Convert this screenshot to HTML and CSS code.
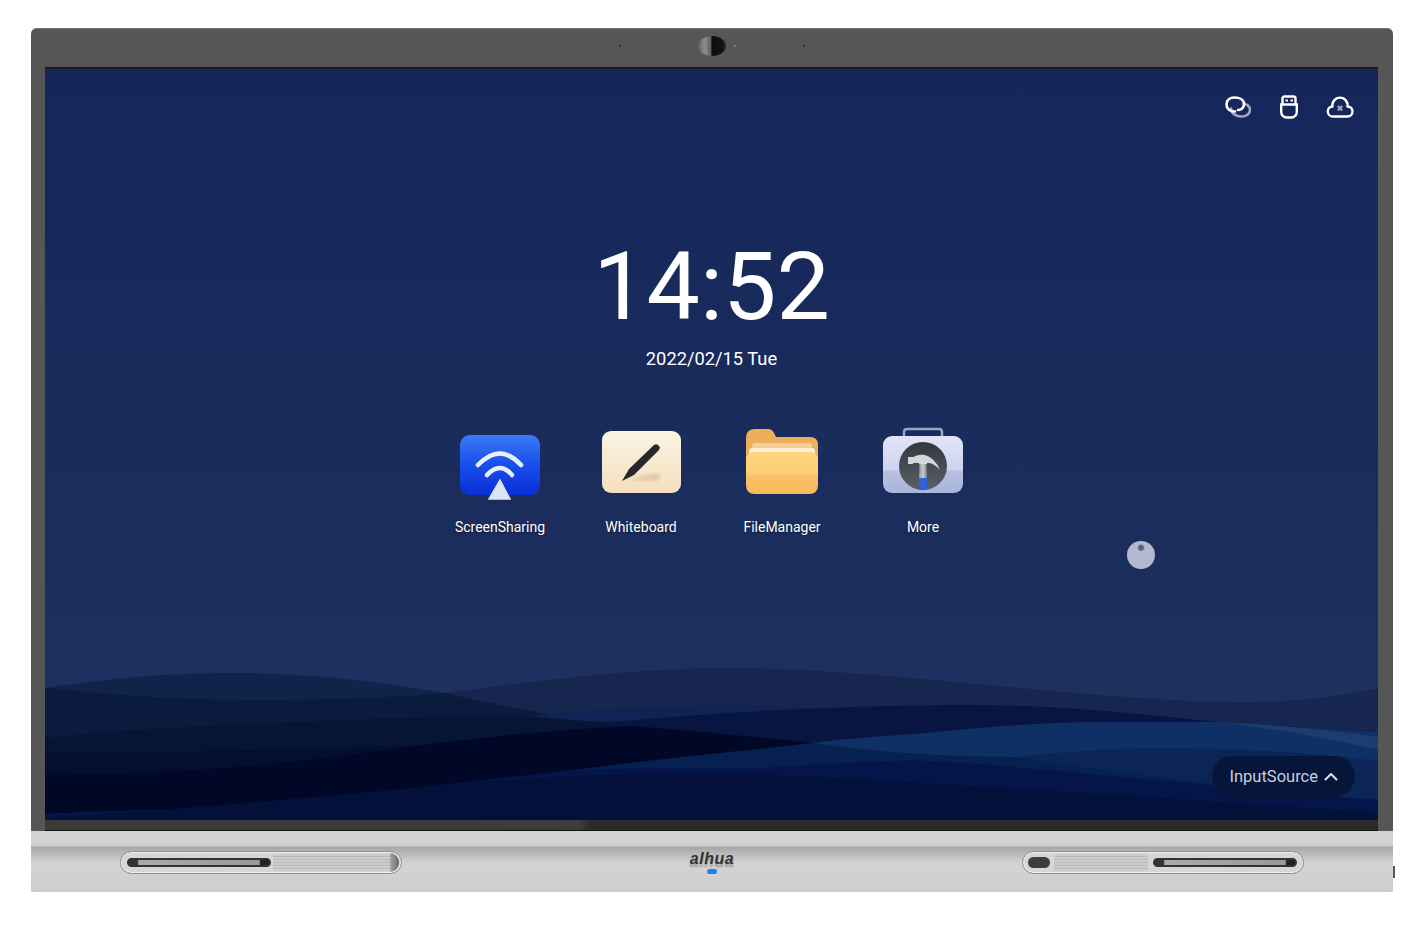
FILE: index.html
```html
<!doctype html>
<html>
<head>
 <title>Interactive Display</title>
 <meta name=viewport content="width=device-width, initial-scale=1">
 <link rel="stylesheet" href="styles.css">
</head>
<body>
<div class=device>
 <div class=bezel>
  <div class=mics-left><span class=mic></span></div>
  <span class=cam></span>
  <div class=mics-right><span class="mic mic-near"></span><span class=mic></span></div>
 </div>
 <div class=panel>
  <div class=screen>
   <svg class=waves viewBox="45 640 1333 180" preserveAspectRatio="none">
    <path fill="#17264f" d="M445 693C540 680 640 668 730 668C880 668 1100 702 1240 702C1300 702 1345 696 1378 688V820H445Z"/>
    <path fill="#10244b" d="M45 688C110 678 170 673 231 673C310 673 380 682 445 693L700 760L45 760Z"/>
    <path fill="#0a1b3e" d="M45 688C120 696 190 700 253 700C320 700 390 698 445 693C500 706 560 716 620 726L620 790H45Z"/>
    <path fill="#0f2452" d="M530 716C600 708 680 706 760 705L1000 720L700 745L600 725Z"/>
    <path fill="#061536" d="M45 738C120 730 190 726 253 724C340 720 420 717 490 716C530 716 570 720 625 724L660 780H45Z"/>
    <path fill="#071540" d="M610 722C720 712 850 705 970 705C1060 705 1140 714 1218 722L1378 732V800H700Z"/>
    <path fill="#040f30" d="M45 752C120 751 190 752 253 750L420 745L500 790H45Z"/>
    <path fill="#010726" d="M45 775C150 775 260 768 387 750C470 738 550 730 633 726C680 730 750 736 812 743C780 747 755 749 730 752C670 758 620 764 566 771C500 778 440 785 387 791C340 797 300 802 253 806L45 814Z"/>
    <path fill="#0e3064" d="M812 743C850 738 885 736 925 733C985 727 1045 722 1105 722H1218L1378 732V780H880Z"/>
    <path fill="#1c3d6e" d="M1218 722C1280 725 1330 730 1378 737V750C1345 742 1300 732 1218 722Z"/>
    <path fill="#0b2656" d="M1015 757C1060 752 1105 749 1150 748C1230 748 1310 752 1378 761V800H1000Z"/>
    <path fill="#06204f" d="M566 771C620 764 670 758 730 752C760 749 790 746 812 743C860 750 920 756 1015 757C1100 770 1250 790 1378 800V820H566Z"/>
    <path fill="#04154a" d="M45 814L253 806C300 802 340 797 387 791L566 771C640 766 700 770 760 768C820 765 890 758 948 762C1040 768 1250 790 1378 800V820H45Z"/>
    <path fill="#02103a" d="M45 818C200 808 340 795 476 782C560 776 640 773 700 773C800 774 1000 788 1150 797C1230 803 1310 808 1378 813V820H45Z"/>
   </svg>
   <div class=status>
    <svg class=ico-link viewBox="0 0 26 22" fill=none stroke-linecap=round stroke-width=2.600>
     <path stroke="#a2a9bf" d="M20 8C23 9 25 11 25 14C25 18 21 20.500 16.500 20.500C10.500 20.500 6.500 17.500 6 12.500"/>
     <path stroke="#fff" d="M10 15.500C5 15.500 1.500 13 1.500 8.500C1.500 4 5 1.500 9.500 1.500C15 1.500 19 4 19 8C19 12 16 14 13 14"/>
    </svg>
    <svg class=ico-usb viewBox="1 0 18 24" fill=none stroke="#fff" stroke-width=2.400>
     <path d="M3.500 9V3.500Q3.500 1.500 5.500 1.500H14.500Q16.500 1.500 16.500 3.500V9"/>
     <path d="M2.200 9.500H17.800V17A5.500 5.500 0 0 1 12.300 22.500H7.700A5.500 5.500 0 0 1 2.200 17Z"/>
     <path stroke-width=2 d="M6.500 5.500H9M11.500 5.500H14"/>
    </svg>
    <svg class=ico-cloud viewBox="0 0 28 22" fill=none stroke="#fff" stroke-width=2.400 stroke-linejoin=round>
     <path d="M7 20.500H21.500A5 5 0 0 0 21.500 10.500A7.600 7.600 0 1 0 6.500 10.500A5 5 0 0 0 7 20.500Z"/>
     <path stroke="#a2a9bf" stroke-width=2 d="M11.800 10L16.200 14.500M16.200 10L11.800 14.500"/>
    </svg>
   </div>
   <div class=clock>14:52</div>
   <div class=date>2022/02/15 Tue</div>
   <div class=apps>
    <div class=app>
     <svg viewBox="0 0 100 76">
      <defs><linearGradient id=gs x1=0 y1=0 x2=0 y2=1><stop offset=0 stop-color="#3d7bf7"/><stop offset=.45 stop-color="#1a52ec"/><stop offset=1 stop-color="#0a2fd6"/></linearGradient></defs>
      <rect x=10 y=9 width=80 height=60 rx=10 fill="url(#gs)"/>
      <g fill=none stroke="#e9eefc" stroke-width=4.500 stroke-linecap=round>
       <path d="M28 39Q50 16 71 39"/>
       <path d="M37 49Q50 35 62 49"/>
      </g>
      <path d="M50 54L60 73H39Z" fill="#dde2f6" stroke="#dde2f6" stroke-width=1.500 stroke-linejoin=round/>
     </svg>
     <span>ScreenSharing</span>
    </div>
    <div class=app>
     <svg viewBox="0 0 100 76">
      <defs>
       <linearGradient id=gw x1=0 y1=0 x2=0 y2=1><stop offset=0 stop-color="#fbf3e3"/><stop offset=1 stop-color="#f5dfbd"/></linearGradient>
       <filter id=bl><feGaussianBlur stdDeviation=2 /></filter>
      </defs>
      <rect x=11 y=5 width=79 height=62 rx=9 fill="url(#gw)"/>
      <path d="M33 55L68 47V54Z" fill="#cdb492" opacity=.7 filter="url(#bl)"/>
      <path d="M31 55L38 43L63 19Q66 17 68 20Q70 22 67 25L43 49Z" fill="#26282c"/>
     </svg>
     <span>Whiteboard</span>
    </div>
    <div class=app>
     <svg viewBox="0 0 100 76">
      <defs><linearGradient id=gf x1=0 y1=0 x2=0 y2=1><stop offset=0 stop-color="#fed67f"/><stop offset=.55 stop-color="#fdcc74"/><stop offset=.56 stop-color="#fac167"/><stop offset=1 stop-color="#f8b95a"/></linearGradient></defs>
      <path d="M14 12Q14 3 23 3H36Q40 3 42 7L44 11H78Q86 11 86 19V40H14Z" fill="#eeae5a"/>
      <rect x=20 y=17 width=60 height=12 rx=3 fill="#f5cf97"/>
      <rect x=17 y=22 width=66 height=7 rx=3 fill="#fbeed6"/>
      <path d="M14 34Q14 26 23 26H78Q86 26 86 34V59Q86 68 77 68H23Q14 68 14 59Z" fill="url(#gf)"/>
     </svg>
     <span>FileManager</span>
    </div>
    <div class=app>
     <svg viewBox="0 0 100 76">
      <defs>
       <linearGradient id=gm x1=0 y1=0 x2=0 y2=1><stop offset=0 stop-color="#e2e5f9"/><stop offset=.6 stop-color="#cdd3ee"/><stop offset=.61 stop-color="#b6c0e0"/><stop offset=1 stop-color="#a9b5da"/></linearGradient>
       <linearGradient id=gc x1=0 y1=0 x2=0 y2=1><stop offset=0 stop-color="#33383f"/><stop offset=1 stop-color="#5b6067"/></linearGradient>
       <linearGradient id=gh x1=0 y1=0 x2=1 y2=0><stop offset=0 stop-color="#8e939b"/><stop offset=.5 stop-color="#c9ccd1"/><stop offset=1 stop-color="#7d828a"/></linearGradient>
      </defs>
      <path d="M31 12V6Q31 3 34 3H66Q69 3 69 6V12" fill=none stroke="#9aa5c6" stroke-width=2.500 />
      <rect x=10 y=10 width=80 height=57 rx=9 fill="url(#gm)"/>
      <circle cx=50 cy=40 r=24 fill="url(#gc)"/>
      <path d="M46.500 37H53.500L54 52H46Z" fill="url(#gh)"/>
      <rect x=46 y=52 width=8 height=12 fill="#2d62d8"/>
      <path d="M35 31H40Q46 28 52 29Q62 32 67 44Q60 36 54 37V38H46V37H40V38H35Z" fill="#d4d7db"/>
     </svg>
     <span>More</span>
    </div>
   </div>
   <div class=source>InputSource
    <svg viewBox="0 0 14 9" fill=none stroke="#dfe3ee" stroke-width=2 stroke-linecap=round stroke-linejoin=round><path d="M1.500 7.500L7 2L12.500 7.500"/></svg>
   </div>
   <div class=touch></div>
  </div>
  <div class=chin></div>
 </div>
 <div class=bar>
  <div class=tray>
   <div class=pen></div>
   <div class=ribs></div>
   <div class=cap></div>
  </div>
  <div class=logo>
   <span class=brand>alhua</span>
   <span class=led></span>
  </div>
  <div class="tray tray2">
   <div class=eraser></div>
   <div class=ribs></div>
   <div class="pen pen2"></div>
  </div>
  <span class=stub></span>
 </div>
</div>
</body>
</html>
```

FILE: styles.css
```css
body {
  margin: 0;
  background: #fff;
  font-family: Roboto, "Liberation Sans", sans-serif;
}
.device {
  position: relative;
  width: 1362px;
  margin: 28px 0 36px 31px;
  border-radius: 6px 6px 3px 3px;
  background: #565656;
}
.bezel {
  display: grid;
  grid-template-columns: 1fr 28px 1fr;
  align-items: center;
  height: 39px;
  padding-bottom: 5px;
  box-sizing: border-box;
  border-radius: 6px 6px 0 0;
  border-top: 1px solid #777;
}
.mics-left {
  display: flex;
  justify-content: flex-end;
  padding-right: 77px;
}
.mics-right {
  display: flex;
  gap: 67px;
  padding-left: 8px;
}
.mic {
  width: 2px;
  height: 2px;
  border-radius: 50%;
  background: #2a2a2a;
}
.mic-near { background: #8d8d8d; }
.cam {
  height: 20px;
  border-radius: 50%;
  background: linear-gradient(90deg, #606060 0, #8f8f8f 25%, #5c5c5c 46%, #0c0c12 50%, #101018 85%, #2c2c2c 100%);
}
.panel {
  padding: 0 15px 0 14px;
}
.screen {
  position: relative;
  height: 753px;
  overflow: hidden;
  border-top: 2px solid #1c1c1c;
  box-sizing: border-box;
  text-align: center;
  color: #fff;
  background: linear-gradient(#15275a 0, #1a2d5c 60%, #1e3260 88%);
}
.waves {
  position: absolute;
  left: 0;
  bottom: 0;
  width: 100%;
  height: 180px;
}
.status {
  position: relative;
  display: flex;
  justify-content: flex-end;
  align-items: center;
  gap: 28px;
  height: 24px;
  padding: 26px 24px 0 0;
}
.ico-link { width: 26px; height: 22px; margin-right: 1px; }
.ico-usb { width: 18px; height: 24px; }
.ico-cloud { width: 28px; height: 22px; }
.clock {
  position: relative;
  margin-top: 113px;
  font-size: 95px;
  font-weight: 400;
  line-height: 110px;
}
.date {
  position: relative;
  margin-top: 6px;
  font-size: 18.300px;
  line-height: 22px;
}
.apps {
  position: relative;
  display: grid;
  grid-template-columns: repeat(4, 141px);
  justify-content: center;
  margin-top: 56px;
}
.app {
  display: flex;
  flex-direction: column;
  align-items: center;
  font-size: 14px;
  line-height: 18px;
  text-shadow: 0 1px 2px rgba(0, 0, 0, .5);
}
.app svg {
  width: 100px;
  height: 76px;
  margin-bottom: 16px;
}
.source {
  position: absolute;
  right: 23px;
  bottom: 23px;
  display: flex;
  align-items: center;
  gap: 6px;
  height: 41px;
  padding: 0 17px 0 18px;
  border-radius: 21px;
  background: #06153a;
  color: #c9cedc;
  font-size: 16.500px;
}
.source svg { width: 14px; height: 9px; }
.touch {
  position: absolute;
  left: 1082px;
  top: 472px;
  width: 28px;
  height: 28px;
  border-radius: 50%;
  background: radial-gradient(circle at 50% 24%, #5a6072 0, #5a6072 2px, #b4b9d0 4px);
}
.chin {
  height: 10px;
  background: linear-gradient(90deg, #3a3a3a 0, #3d3d3d 40%, #2a2a2a 41%, #2a2a2a 100%);
  border-bottom: 1px solid #111;
}
.bar {
  position: relative;
  display: flex;
  justify-content: space-between;
  height: 61px;
  padding: 20px 89px 0;
  box-sizing: border-box;
  border-radius: 0 0 3px 3px;
  background: linear-gradient(#d3d3d1 0, #cfcfcd 15px, #a6a6a6 16px, #d4d4d4 32px, #cdcdcd 100%);
}
.tray {
  display: flex;
  align-items: center;
  width: 282px;
  height: 23px;
  padding: 0 2px 0 6px;
  box-sizing: border-box;
  border: 1px solid #8f8f8f;
  border-radius: 12px;
  background: #d6d6d6;
  box-shadow: inset 0 0 0 1px #eee;
}
.tray2 { padding: 0 6px 0 5px; }
.pen {
  flex: none;
  width: 144px;
  height: 9px;
  border: 2px solid #333;
  box-sizing: border-box;
  border-radius: 5px;
  background: linear-gradient(90deg, #333 0, #333 6%, #aaa 7%, #999 93%, #222 94%);
}
.pen2 { margin-left: 5px; }
.ribs {
  flex: 1;
  height: 17px;
  margin-left: 2px;
  background: repeating-linear-gradient(#cdcdcd 0, #cdcdcd 2px, #bababa 2px, #bababa 3px);
}
.cap {
  width: 9px;
  height: 19px;
  border-radius: 0 10px 10px 0;
  background: linear-gradient(90deg, #aaa, #666);
}
.eraser {
  flex: none;
  width: 22px;
  height: 11px;
  margin-right: 2px;
  border-radius: 6px;
  background: #3c3c3c;
}
.logo {
  display: flex;
  flex-direction: column;
  align-items: center;
  margin-top: 1px;
}
.brand {
  color: #333;
  font-family: "Liberation Sans", sans-serif;
  font-size: 16px;
  font-style: italic;
  font-weight: bold;
  letter-spacing: .5px;
  line-height: 13px;
  text-shadow: 0 3px 2px #999;
}
.led {
  width: 10px;
  height: 5px;
  margin-top: 4px;
  border-radius: 3px;
  background: #1f80e8;
}
.stub {
  position: absolute;
  right: -2px;
  top: 35px;
  width: 2px;
  height: 12px;
  background: #555;
}
```
